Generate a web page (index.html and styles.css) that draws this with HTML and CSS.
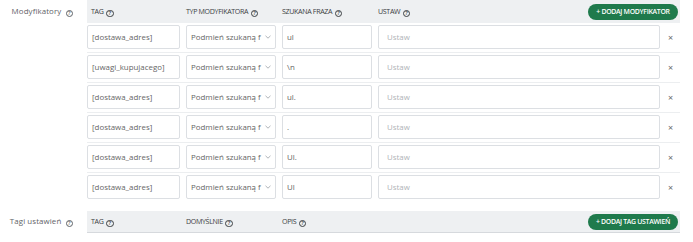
FILE: index.html
```html
<!DOCTYPE html>
<html lang="pl">
<head>
<meta charset="utf-8">
<title>Modyfikatory</title>
<link rel="stylesheet" href="styles.css">
</head>
<body>
<div class="section">
  <div class="label">Modyfikatory <span class="help">?</span></div>
  <div class="table">
    <div class="thead">
      <div class="th th-first">TAG <span class="help">?</span></div>
      <div class="th">TYP MODYFIKATORA <span class="help">?</span></div>
      <div class="th">SZUKANA FRAZA <span class="help">?</span></div>
      <div class="th">USTAW <span class="help">?</span></div>
      <button class="btn">+ DODAJ MODYFIKATOR</button>
    </div>
    <div class="row">
      <div class="field">[dostawa_adres]</div>
      <div class="select"><span class="sel-text">Podmień szukaną f</span><svg class="chev" width="6" height="4" viewBox="0 0 6 4"><path d="M0.5 0.8 L3 3.2 L5.5 0.8" fill="none" stroke="#9aa0a6" stroke-width="0.8"/></svg></div>
      <div class="field">ul</div>
      <div class="field placeholder">Ustaw</div>
      <div class="del">×</div>
    </div>
    <div class="row">
      <div class="field">[uwagi_kupujacego]</div>
      <div class="select"><span class="sel-text">Podmień szukaną f</span><svg class="chev" width="6" height="4" viewBox="0 0 6 4"><path d="M0.5 0.8 L3 3.2 L5.5 0.8" fill="none" stroke="#9aa0a6" stroke-width="0.8"/></svg></div>
      <div class="field">\n</div>
      <div class="field placeholder">Ustaw</div>
      <div class="del">×</div>
    </div>
    <div class="row">
      <div class="field">[dostawa_adres]</div>
      <div class="select"><span class="sel-text">Podmień szukaną f</span><svg class="chev" width="6" height="4" viewBox="0 0 6 4"><path d="M0.5 0.8 L3 3.2 L5.5 0.8" fill="none" stroke="#9aa0a6" stroke-width="0.8"/></svg></div>
      <div class="field">ul.</div>
      <div class="field placeholder">Ustaw</div>
      <div class="del">×</div>
    </div>
    <div class="row">
      <div class="field">[dostawa_adres]</div>
      <div class="select"><span class="sel-text">Podmień szukaną f</span><svg class="chev" width="6" height="4" viewBox="0 0 6 4"><path d="M0.5 0.8 L3 3.2 L5.5 0.8" fill="none" stroke="#9aa0a6" stroke-width="0.8"/></svg></div>
      <div class="field">.</div>
      <div class="field placeholder">Ustaw</div>
      <div class="del">×</div>
    </div>
    <div class="row">
      <div class="field">[dostawa_adres]</div>
      <div class="select"><span class="sel-text">Podmień szukaną f</span><svg class="chev" width="6" height="4" viewBox="0 0 6 4"><path d="M0.5 0.8 L3 3.2 L5.5 0.8" fill="none" stroke="#9aa0a6" stroke-width="0.8"/></svg></div>
      <div class="field">Ul.</div>
      <div class="field placeholder">Ustaw</div>
      <div class="del">×</div>
    </div>
    <div class="row row-last">
      <div class="field">[dostawa_adres]</div>
      <div class="select"><span class="sel-text">Podmień szukaną f</span><svg class="chev" width="6" height="4" viewBox="0 0 6 4"><path d="M0.5 0.8 L3 3.2 L5.5 0.8" fill="none" stroke="#9aa0a6" stroke-width="0.8"/></svg></div>
      <div class="field">Ul</div>
      <div class="field placeholder">Ustaw</div>
      <div class="del">×</div>
    </div>
  </div>
</div>
<div class="section section-tags">
  <div class="label label-tags">Tagi ustawień <span class="help">?</span></div>
  <div class="table">
    <div class="thead thead-tags">
      <div class="th th-first">TAG <span class="help">?</span></div>
      <div class="th">DOMYŚLNIE <span class="help">?</span></div>
      <div class="th">OPIS <span class="help">?</span></div>
      <div class="th"></div>
      <button class="btn">+ DODAJ TAG USTAWIEŃ</button>
    </div>
  </div>
</div>
</body>
</html>
```
FILE: styles.css
```css
* { box-sizing: border-box; }
body {
  margin: 0;
  background: #fff;
  font-family: "Open Sans", "Liberation Sans", sans-serif;
  color: #555;
}
.section {
  display: flex;
  align-items: flex-start;
}
.label {
  width: 87px;
  flex: none;
  text-align: right;
  padding-right: 14px;
  font-size: 7.9px;
  letter-spacing: 0.1px;
  line-height: 23px;
  color: #5f6368;
  white-space: nowrap;
}
.label-tags { line-height: 21px; }
.label .help { margin-left: 2px; }
.table {
  width: 593px;
  flex: none;
}
.help {
  display: inline-flex;
  align-items: center;
  justify-content: center;
  width: 7.5px;
  height: 7.5px;
  border: 0.7px solid currentColor;
  border-radius: 50%;
  font-size: 5.5px;
  font-weight: 600;
  line-height: 1;
  letter-spacing: 0;
  vertical-align: -0.5px;
  margin-left: 1px;
}
.thead {
  display: grid;
  grid-template-columns: 99px 96px 96px 1fr auto;
  align-items: center;
  height: 23px;
  background: #eef0f2;
  padding-right: 2px;
}
.th {
  font-size: 7.1px;
  letter-spacing: -0.35px;
  color: #3c4043;
  white-space: nowrap;
}
.th-first { padding-left: 4px; }
.btn {
  border: none;
  background: #1f7a4c;
  color: #fff;
  font-family: "Open Sans", "Liberation Sans", sans-serif;
  font-weight: 600;
  font-size: 6.9px;
  letter-spacing: -0.3px;
  height: 16px;
  width: 90px;
  border-radius: 8px;
  padding: 0;
  white-space: nowrap;
}
.row {
  display: grid;
  grid-template-columns: 93px 90px 90px 282px 14px;
  column-gap: 6px;
  align-items: center;
  padding: 2px 0 3px;
  border-bottom: 1px solid #eceef0;
}
.row-last { border-bottom: none; }
.field, .select {
  height: 24px;
  border: 1px solid #dcdfe3;
  border-radius: 2px;
  background: #fff;
  font-size: 7.9px;
  color: #666;
  padding: 0 4px;
  display: flex;
  align-items: center;
  white-space: nowrap;
  overflow: hidden;
}
.placeholder { color: #b0b3b7; padding-left: 8px; }
.select { padding-right: 4px; }
.sel-text {
  flex: 1;
  min-width: 0;
}
.chev { flex: none; margin-left: 2px; }
.del {
  text-align: left;
  padding-left: 2px;
  font-size: 9px;
  color: #666;
}
.section-tags {
  margin-top: 9px;
}
.thead-tags {
  height: 22px;
  border-bottom: 1px solid #d6d9dd;
}
```
